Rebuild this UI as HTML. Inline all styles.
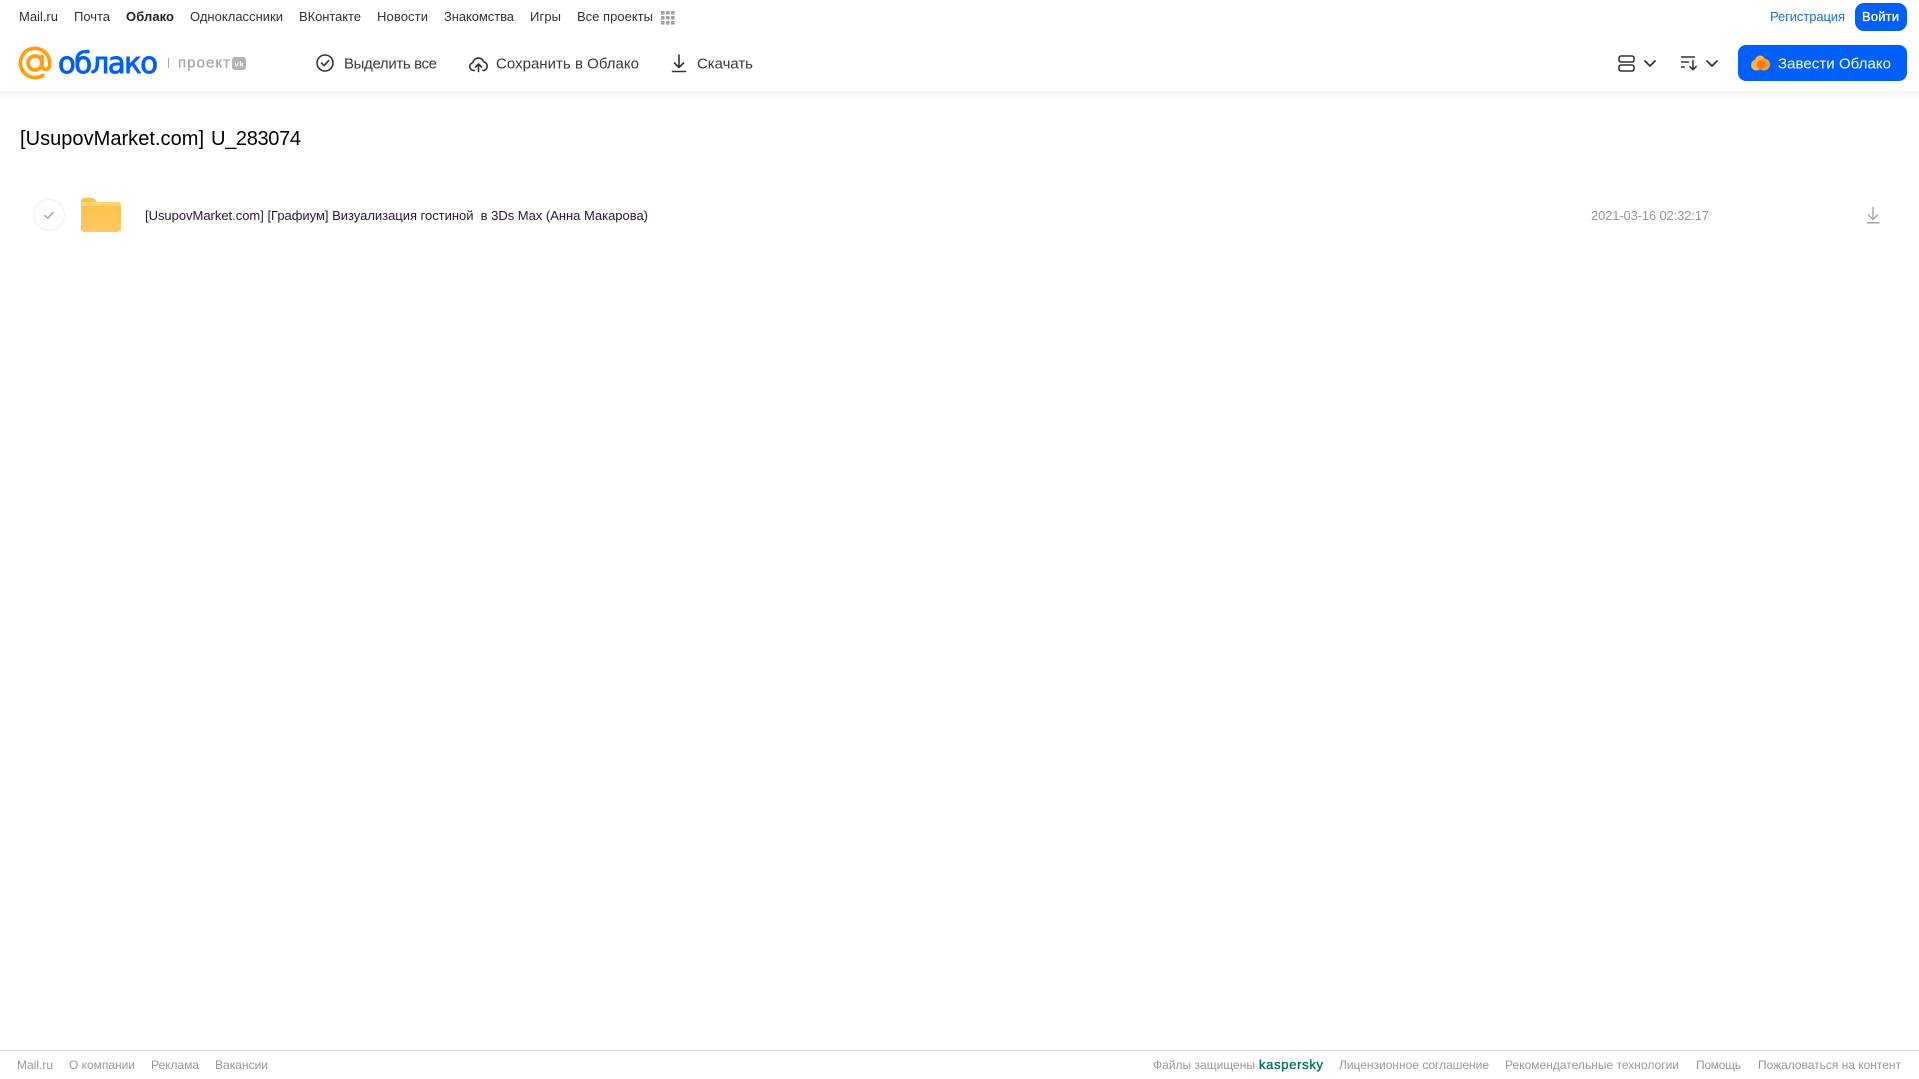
<!DOCTYPE html>
<html lang="ru">
<head>
<meta charset="utf-8">
<title>Облако</title>
<style>
html,body{margin:0;padding:0;background:#fff;width:1919px;height:1079px;overflow:hidden}
svg{display:block;position:absolute;left:0;top:0}
text{font-family:"Liberation Sans",Arial,sans-serif;white-space:pre}
.n{font-size:13px;fill:#333}
.t{font-size:15px;fill:#3a3a3a}
.f{font-size:12px;fill:#999}
</style>
</head>
<body>
<svg width="1919" height="1079" viewBox="0 0 1919 1079" xmlns="http://www.w3.org/2000/svg">
<defs>
<linearGradient id="sh" x1="0" y1="0" x2="0" y2="1"><stop offset="0" stop-color="#f4f4f4"/><stop offset="1" stop-color="#fff"/></linearGradient>
<linearGradient id="fo" x1="0" y1="0" x2="0" y2="1"><stop offset="0" stop-color="#ffc04a"/><stop offset="1" stop-color="#ffc95f"/></linearGradient>
</defs>
<rect x="0" y="91" width="1919" height="10" fill="url(#sh)"/>

<!-- top nav -->
<text class="n" x="19" y="21" textLength="39">Mail.ru</text>
<text class="n" x="74" y="21" textLength="36">Почта</text>
<text class="n" x="126" y="21" textLength="48" font-weight="700" style="fill:#222">Облако</text>
<text class="n" x="190" y="21" textLength="93">Одноклассники</text>
<text class="n" x="299" y="21" textLength="62">ВКонтакте</text>
<text class="n" x="377" y="21" textLength="51">Новости</text>
<text class="n" x="444" y="21" textLength="70">Знакомства</text>
<text class="n" x="530" y="21" textLength="31">Игры</text>
<text class="n" x="577" y="21" textLength="76">Все проекты</text>
<g fill="#a3a3a3">
<rect x="661" y="11" width="3.6" height="3.6" rx=".6"/><rect x="666" y="11" width="3.6" height="3.6" rx=".6"/><rect x="671" y="11" width="3.6" height="3.6" rx=".6"/>
<rect x="661" y="16" width="3.6" height="3.6" rx=".6"/><rect x="666" y="16" width="3.6" height="3.6" rx=".6"/><rect x="671" y="16" width="3.6" height="3.6" rx=".6"/>
<rect x="661" y="21" width="3.6" height="3.6" rx=".6"/><rect x="666" y="21" width="3.6" height="3.6" rx=".6"/><rect x="671" y="21" width="3.6" height="3.6" rx=".6"/>
</g>
<text x="1770" y="21" textLength="75" style="font-size:13px;fill:#1a6fe0">Регистрация</text>
<rect x="1855" y="3" width="52" height="28" rx="9" fill="#005ff9"/>
<text x="1862" y="21" textLength="37" style="font-size:13px;fill:#fff;stroke:#fff;stroke-width:.3">Войти</text>

<!-- logo -->
<g fill="none" stroke="#ffa00a" stroke-width="3.700" stroke-linecap="round">
<circle cx="35" cy="63" r="7"/>
<path d="M42 56.500v9a3.800 3.800 0 0 0 7.600 0V63a14.600 14.600 0 1 0-6.800 12.300"/>
</g>
<text x="58" y="73" textLength="100" style="font-family:'DejaVu Sans',sans-serif;font-size:29px;fill:#005ff9;stroke:#005ff9;stroke-width:.9">облако</text>
<rect x="168" y="58" width="1" height="10" fill="#aaa"/>
<text x="178" y="67.500" textLength="52" style="font-size:15px;fill:#a8a8a8;stroke:#a8a8a8;stroke-width:.3">проект</text>
<rect x="232" y="57" width="14" height="13" rx="3" fill="#b3b3b3"/>
<text x="234.500" y="66.500" textLength="9" style="font-size:7.500px;fill:#fff;font-weight:700">vk</text>

<!-- toolbar -->
<circle cx="325" cy="63" r="8" fill="none" stroke="#333" stroke-width="1.600"/>
<path d="M321.500 63l2.600 2.600 4.600-5" fill="none" stroke="#333" stroke-width="1.600" stroke-linecap="round" stroke-linejoin="round"/>
<text class="t" x="344" y="68.500" textLength="93">Выделить все</text>

<path d="M474.500 70.500h-1a4 4 0 0 1-.6-7.900 5.600 5.600 0 0 1 10.800-.8 4.500 4.500 0 0 1 .3 8.700h-1" fill="none" stroke="#333" stroke-width="1.600" stroke-linecap="round" stroke-linejoin="round"/>
<path d="M478.500 71.500v-7.500M475.500 67l3-3 3 3" fill="none" stroke="#333" stroke-width="1.600" stroke-linecap="round" stroke-linejoin="round"/>
<text class="t" x="496" y="68.500" textLength="143">Сохранить в Облако</text>

<path d="M679 55v12.500M674.500 63l4.500 4.500 4.500-4.500M672.500 71.500h13" fill="none" stroke="#333" stroke-width="1.600" stroke-linecap="round" stroke-linejoin="round"/>
<text class="t" x="697" y="68.500" textLength="56">Скачать</text>

<!-- view / sort -->
<rect x="1619" y="56" width="15" height="6" rx="2" fill="none" stroke="#333" stroke-width="1.600"/>
<rect x="1619" y="65" width="15" height="6" rx="2" fill="none" stroke="#333" stroke-width="1.600"/>
<path d="M1645 61l5 5 5-5" fill="none" stroke="#333" stroke-width="1.800" stroke-linecap="round" stroke-linejoin="round"/>
<path d="M1681.500 57h13M1681.500 62h7M1681.500 67h3" fill="none" stroke="#333" stroke-width="1.400" stroke-linecap="round"/>
<path d="M1693 60.500v9M1689.800 66.500l3.200 3.200 3.200-3.200" fill="none" stroke="#333" stroke-width="1.500" stroke-linecap="round" stroke-linejoin="round"/>
<path d="M1707 61l5 5 5-5" fill="none" stroke="#333" stroke-width="1.800" stroke-linecap="round" stroke-linejoin="round"/>

<rect x="1738" y="45" width="169" height="36" rx="8" fill="#005ff9"/>
<g>
<circle cx="1756.500" cy="65" r="5.500" fill="#ffb340"/>
<circle cx="1760" cy="60.500" r="5" fill="#ffb340"/>
<circle cx="1764" cy="64.500" r="6" fill="#ff9a2e"/>
<circle cx="1761" cy="64.500" r="4.500" fill="#ff7a1a"/>
</g>
<text x="1778" y="68.500" textLength="113" style="font-size:15px;fill:#fff">Завести Облако</text>

<!-- title -->
<text x="20" y="145" textLength="184" style="font-size:20px;fill:#000">[UsupovMarket.com]</text>
<text x="211" y="145" textLength="90" style="font-size:20px;fill:#000">U_283074</text>

<!-- row -->
<circle cx="49" cy="215" r="15.500" fill="#fff" stroke="#efefef" stroke-width="1"/>
<path d="M45 215.500l2.800 2.800 5.200-5.800" fill="none" stroke="#999" stroke-width="1.300" stroke-linecap="round" stroke-linejoin="round"/>
<path d="M81 201a3 3 0 0 1 3-3h7.500c2 0 3 1 4 2.200.7.800 1.500 1.800 3 1.800H118a3 3 0 0 1 3 3v24a3 3 0 0 1-3 3H84a3 3 0 0 1-3-3z" fill="url(#fo)"/>
<path d="M81 206h40v-1a3 3 0 0 0-3-3H81z" fill="#ffd17a"/>
<text x="145" y="220" textLength="503" style="font-size:13px;fill:#2b1a33">[UsupovMarket.com] [Графиум] Визуализация гостиной  в 3Ds Max (Анна Макарова)</text>
<text x="1591" y="220" textLength="118" style="font-size:13px;fill:#999">2021-03-16 02:32:17</text>
<path d="M1873 207.500v12M1868.500 215l4.500 4.500 4.500-4.500" fill="none" stroke="#aaa" stroke-width="1.500" stroke-linecap="round" stroke-linejoin="round"/>
<rect x="1867" y="222" width="12.500" height="1.600" fill="#aaa"/>

<!-- footer -->
<rect x="0" y="1050" width="1919" height="1" fill="#dcdcdc"/>
<text class="f" x="17" y="1069" textLength="36">Mail.ru</text>
<text class="f" x="69" y="1069" textLength="66">О компании</text>
<text class="f" x="151" y="1069" textLength="48">Реклама</text>
<text class="f" x="215" y="1069" textLength="53">Вакансии</text>
<text class="f" x="1153" y="1069" textLength="102">Файлы защищены</text>
<text x="1259" y="1069" textLength="64" style="font-size:13px;fill:#006d5c;stroke:#006d5c;stroke-width:.35">kaspersky</text>
<text class="f" x="1339" y="1069" textLength="150">Лицензионное соглашение</text>
<text class="f" x="1505" y="1069" textLength="174">Рекомендательные технологии</text>
<text class="f" x="1696" y="1069" textLength="45">Помощь</text>
<text class="f" x="1758" y="1069" textLength="143">Пожаловаться на контент</text>
</svg>
</body>
</html>
